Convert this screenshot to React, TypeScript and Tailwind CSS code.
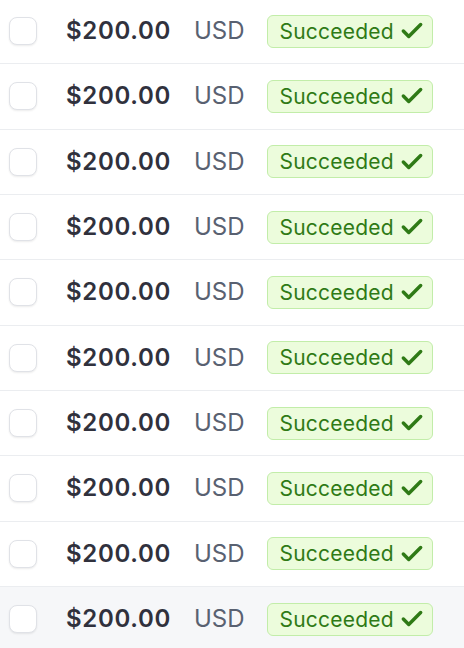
import { Check } from 'lucide-react';

const rows = Array.from({ length: 10 }, (_, i) => ({ id: i, amount: '$200.00', currency: 'USD', status: 'Succeeded' }));

function Checkbox() {
  return (
    <span className="block h-[28px] w-[28px] shrink-0 rounded-[8px] border border-[#e0e2e7] bg-white shadow-[0_1px_2px_rgba(0,0,0,0.08)]" />
  );
}

function StatusBadge({ label }: { label: string }) {
  return (
    <span className="flex h-[33px] w-[166px] items-center gap-[5px] rounded-[6px] border border-[#c2eda9] bg-[#ecfcdc] pl-[12px] text-[21px] leading-none tracking-[0.2px] text-[#2f7a16]">
      {label}
      <Check size={26} strokeWidth={3.2} className="text-[#2f7a16]" />
    </span>
  );
}

export default function App() {
  return (
    <div className="h-[648px] w-[464px] overflow-hidden bg-white font-['Inter',sans-serif]">
      <div className="-mt-[1px]">
        {rows.map((row, i) => (
          <div
            key={row.id}
            className={`flex h-[65.33px] items-center border-b border-[#ebedf0] pl-[9px] ${
              i === rows.length - 1 ? 'bg-[#f6f7f9]' : 'bg-white'
            }`}
          >
            <Checkbox />
            <span className="ml-[29px] w-[104px] text-[24px] font-semibold tracking-[0.7px] text-[#30313d]">{row.amount}</span>
            <span className="ml-[24px] text-[24px] text-[#596171]">{row.currency}</span>
            <span className="ml-[22px]">
              <StatusBadge label={row.status} />
            </span>
          </div>
        ))}
      </div>
    </div>
  );
}
